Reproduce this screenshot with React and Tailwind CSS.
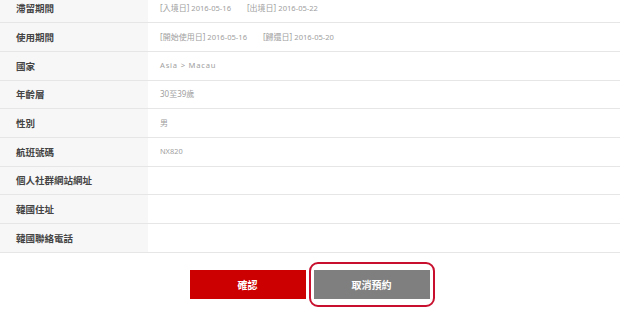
export default function App() {
  const d = "text-[7.6px]";
  const rows = [
    ["滯留期間", (
      <span>
        <span>[入境日] <span className={d}>2016-05-16</span></span>
        <span className="ml-[16px]">[出境日] <span className={d}>2016-05-22</span></span>
      </span>
    )],
    ["使用期間", (
      <span>
        <span>[開始使用日] <span className={d}>2016-05-16</span></span>
        <span className="ml-[16px]">[歸還日] <span className={d}>2016-05-20</span></span>
      </span>
    )],
    ["國家", <span className="text-[7.6px] tracking-[0.8px]">Asia &gt; Macau</span>],
    ["年齡層", "30至39歲"],
    ["性別", "男"],
    ["航班號碼", <span className="text-[7.4px]">NX820</span>],
    ["個人社群網站網址", ""],
    ["韓國住址", ""],
    ["韓國聯絡電話", ""],
  ];
  return (
    <div className="w-[620px] h-[325px] overflow-hidden bg-white" style={{ fontFamily: '"Noto Sans CJK TC", "Noto Sans", sans-serif' }}>
      <div className="mt-[-5.33px]">
        {rows.map(([label, value], i) => (
          <div key={i} className="flex h-[28.67px] border-b border-[#e6e6e6] box-border">
            <div className="w-[148px] shrink-0 bg-[#f7f7f7] flex items-center pl-[16px] text-[9.5px] font-bold text-[#444]">
              {label}
            </div>
            <div className="flex-1 flex items-center pl-[12px] text-[8px] text-[#a0a0a0]" style={{ fontFamily: '"Noto Sans", "Noto Sans CJK TC", sans-serif' }}>
              {value}
            </div>
          </div>
        ))}
      </div>
      <div className="flex justify-center items-center pl-[4px] mt-[9.5px]">
        <button className="w-[116px] h-[28.5px] bg-[#cc0000] text-white text-[10px] font-bold">
          確認
        </button>
        <div className="ml-[3px] border-2 border-[#c8102e] rounded-[9px] px-[3px] py-[6px]">
          <button className="w-[116px] h-[28.5px] block bg-[#7f7f7f] text-white text-[10px] font-bold">
            取消預約
          </button>
        </div>
      </div>
    </div>
  );
}
